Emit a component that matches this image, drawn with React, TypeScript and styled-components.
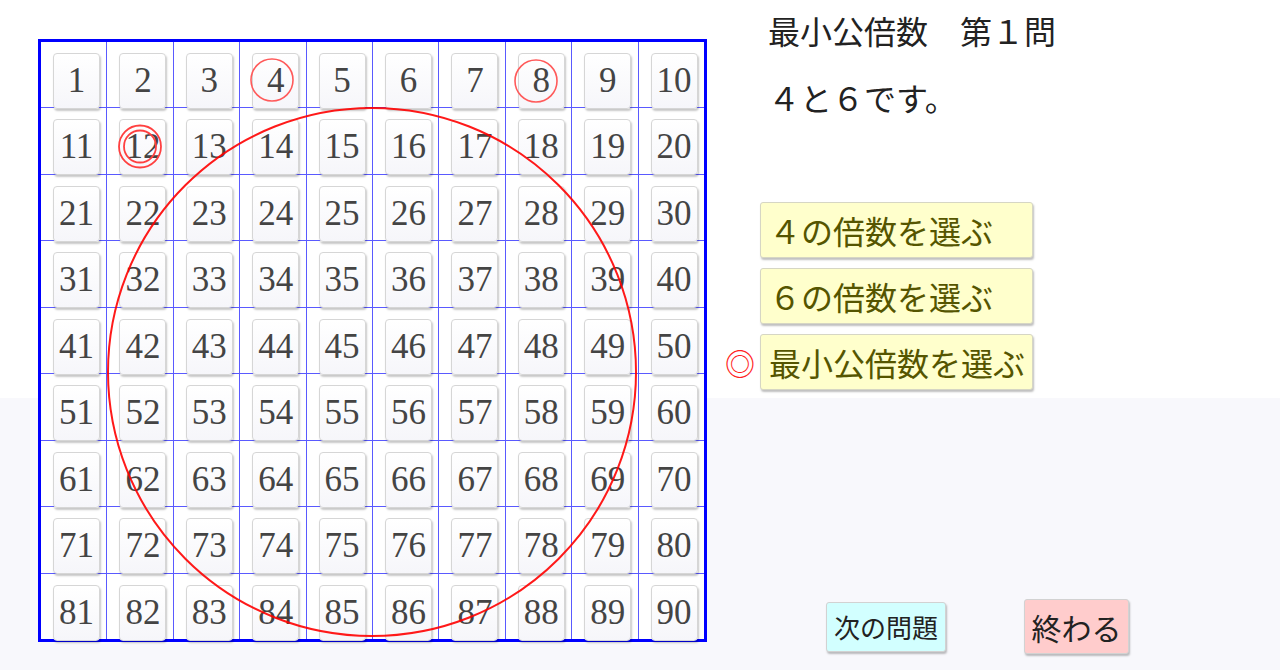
import React from "react"
import styled, { createGlobalStyle } from "styled-components"

const GlobalStyle = createGlobalStyle`
  html, body {
    margin: 0;
    padding: 0;
  }

  body {
    background: #f8f8fc;
    font-family: "Liberation Serif", "Noto Sans CJK JP", serif;
  }
`

const Page = styled.div`
  display: flex;
  width: 1280px;
  height: 670px;
  overflow: hidden;
  background: linear-gradient(#ffffff 0 398px, #f8f8fc 398px);
`

const BoardColumn = styled.div`
  padding: 39px 0 0 38px;
`

const Board = styled.div`
  position: relative;
  box-sizing: border-box;
  width: 669px;
  height: 603px;
  border: 3px solid #0000ff;
  background: #ffffff;
`

const Grid = styled.div`
  display: grid;
  grid-template-columns: repeat(10, minmax(0, 1fr));
  grid-template-rows: repeat(9, minmax(0, 1fr));
  gap: 1px;
  height: 100%;
  background: #5a5aff;
`

const Cell = styled.div`
  min-height: 0;
  background: #ffffff;
`

const Tile = styled.div`
  position: relative;
  z-index: 1;
  box-sizing: border-box;
  display: flex;
  align-items: center;
  justify-content: center;
  width: 47px;
  height: 56px;
  margin: 11px 0 0 12px;
  border: 1px solid #d6d6d6;
  border-radius: 4px;
  background: linear-gradient(#ffffff, #f6f6fa);
  box-shadow: 1px 2px 2px rgba(0, 0, 0, 0.22);
  font-family: "Liberation Serif", serif;
  font-size: 35px;
  color: #444444;
`

const Marks = styled.svg`
  position: absolute;
  top: -3px;
  left: -3px;
  z-index: 2;
  pointer-events: none;
`

const Side = styled.div`
  flex: 1;
  display: flex;
  flex-direction: column;
  padding-left: 13px;
`

const Title = styled.div`
  margin: 13px 0 0 48px;
  font-size: 32px;
  line-height: 40px;
  color: #222222;
`

const Question = styled(Title)`
  margin-top: 27px;
`

const Options = styled.div`
  display: flex;
  flex-direction: column;
  gap: 10px;
  margin-top: 82px;
`

const OptionRow = styled.div`
  display: flex;
  align-items: center;
`

const Marker = styled.span`
  width: 40px;
  font-family: "Noto Sans CJK JP", sans-serif;
  font-size: 30px;
  line-height: 56px;
  text-align: center;
  color: #ff2020;
`

const OptionButton = styled.button`
  box-sizing: border-box;
  display: flex;
  align-items: center;
  width: 273px;
  height: 56px;
  padding: 0 0 0 8px;
  border: 1px solid #d6d6c4;
  border-radius: 3px;
  background: #ffffcc;
  box-shadow: 1px 2px 2px rgba(0, 0, 0, 0.25);
  font-family: "Liberation Serif", "Noto Sans CJK JP", serif;
  font-size: 32px;
  color: #555500;
  cursor: pointer;
`

const Footer = styled.div`
  display: flex;
  align-items: center;
  gap: 78px;
  margin-top: auto;
  padding: 0 0 16px 106px;
`

const FooterButton = styled.button<{ $bg: string; $w: number; $h: number; $size: number }>`
  box-sizing: border-box;
  width: ${(p) => p.$w}px;
  height: ${(p) => p.$h}px;
  padding: 0;
  border: 1px solid #d2d2d2;
  border-radius: 3px;
  background: ${(p) => p.$bg};
  box-shadow: 1px 2px 2px rgba(0, 0, 0, 0.25);
  font-family: "Noto Sans CJK JP", sans-serif;
  font-size: ${(p) => p.$size}px;
  color: #222222;
  cursor: pointer;
`

const numbers = Array.from({ length: 90 }, (_, i) => i + 1)

const options = [
  { label: "４の倍数を選ぶ", mark: false },
  { label: "６の倍数を選ぶ", mark: false },
  { label: "最小公倍数を選ぶ", mark: true },
]

const App = () => (
  <>
    <GlobalStyle />
    <Page>
      <BoardColumn>
        <Board>
          <Grid>
            {numbers.map((n) => (
              <Cell key={n}>
                <Tile>{n}</Tile>
              </Cell>
            ))}
          </Grid>
          <Marks width="669" height="603" viewBox="0 0 669 603">
            <circle cx="334" cy="333" r="264" fill="none" stroke="#ff0000" strokeWidth="2" opacity="0.9" />
            <circle cx="234" cy="41" r="21" fill="none" stroke="#ff5a5a" strokeWidth="1.6" />
            <circle cx="498" cy="42" r="21" fill="none" stroke="#ff5a5a" strokeWidth="1.6" />
            <circle cx="102" cy="107.5" r="21" fill="none" stroke="#ff4040" strokeWidth="1.8" />
            <circle cx="102" cy="107.5" r="16" fill="none" stroke="#ff4040" strokeWidth="1.8" />
          </Marks>
        </Board>
      </BoardColumn>

      <Side>
        <Title>最小公倍数　第１問</Title>
        <Question>４と６です。</Question>

        <Options>
          {options.map((o) => (
            <OptionRow key={o.label}>
              <Marker>{o.mark ? "◎" : ""}</Marker>
              <OptionButton>{o.label}</OptionButton>
            </OptionRow>
          ))}
        </Options>

        <Footer>
          <FooterButton $bg="#d2ffff" $w={120} $h={50} $size={26}>
            次の問題
          </FooterButton>
          <FooterButton $bg="#ffcccc" $w={105} $h={55} $size={30}>
            終わる
          </FooterButton>
        </Footer>
      </Side>
    </Page>
  </>
)

export default App
